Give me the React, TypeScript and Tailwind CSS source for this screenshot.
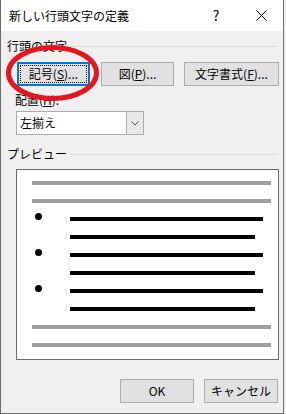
import React from "react";

function Btn({
  children,
  className,
  focused,
}: {
  children: React.ReactNode;
  className: string;
  focused?: boolean;
}) {
  if (focused) {
    return (
      <div
        className={`flex h-[24px] items-center justify-center border-2 border-[#0078d7] bg-[#e1e1e1] p-[1px] ${className}`}
      >
        <div className="flex h-full w-full items-center justify-center border border-dotted border-black">
          {children}
        </div>
      </div>
    );
  }
  return (
    <div
      className={`flex h-[24px] items-center justify-center border border-[#adadad] bg-[#e1e1e1] ${className}`}
    >
      {children}
    </div>
  );
}

function GroupLabel({ text, className }: { text: string; className: string }) {
  return (
    <div className={`flex h-[16px] items-center ${className}`}>
      <span className="leading-[16px]">{text}</span>
      <div className="ml-[3px] mr-[5px] h-px flex-1 bg-[#dcdcdc]" />
    </div>
  );
}

function Bar({ gray, bullet, width }: { gray?: boolean; bullet?: boolean; width: string }) {
  if (gray) {
    return <div className={`ml-[15px] h-[4px] bg-[#a0a0a0] ${width}`} />;
  }
  return (
    <div className="flex h-[4px] items-start">
      <span
        className={`ml-[18px] mt-[-4px] h-[7px] w-[7px] shrink-0 rounded-full ${bullet ? "bg-black" : ""}`}
      />
      <div className={`ml-[28px] h-[4px] bg-black ${width}`} />
    </div>
  );
}

export default function App() {
  return (
    <div className="relative h-[414px] w-[286px] bg-[#f0f0f0] font-['Noto_Sans_CJK_JP','Noto_Sans',sans-serif] text-[12px] text-black">
      <div className="flex h-[414px] w-[284px] flex-col border-b border-l border-r border-[#6b6b6b]">
        <div className="flex h-[31px] items-center bg-white">
          <span className="pl-[8px] leading-[16px]">新しい行頭文字の定義</span>
          <span className="ml-auto flex w-[46px] justify-center text-[14px]">?</span>
          <span className="flex w-[44px] justify-center">
            <svg width="11" height="11" viewBox="0 0 11 11">
              <path d="M0.5 0.5 L10.5 10.5 M10.5 0.5 L0.5 10.5" stroke="#000" strokeWidth="1" />
            </svg>
          </span>
        </div>

        <div className="flex flex-1 flex-col pl-[6px]">
          <GroupLabel text="行頭の文字" className="mt-[7px]" />

          <div className="ml-[10px] mt-[8px] flex">
            <Btn focused className="w-[73px]">
              記号(<span className="underline">S</span>)...
            </Btn>
            <Btn className="ml-[11px] w-[73px]">
              図(<span className="underline">P</span>)...
            </Btn>
            <Btn className="ml-[10px] w-[95px]">
              文字書式(<span className="underline">F</span>)...
            </Btn>
          </div>

          <div className="ml-[8px] mt-[6px] h-[16px] leading-[16px]">
            配置(<span className="underline">H</span>):
          </div>

          <div className="ml-[9px] mt-[3px] flex h-[24px] w-[128px] border border-[#adadad] bg-white">
            <span className="flex-1 pl-[3px] leading-[22px]">左揃え</span>
            <span className="flex w-[17px] items-center justify-center border-l border-[#adadad] bg-[#e8e8e8]">
              <svg width="8" height="5" viewBox="0 0 8 5">
                <path d="M0.5 0.5 L4 4 L7.5 0.5" fill="none" stroke="#555" strokeWidth="1" />
              </svg>
            </span>
          </div>

          <GroupLabel text="プレビュー" className="mt-[11px]" />

          <div className="ml-[9px] mt-[7px] flex h-[191px] w-[263px] flex-col gap-[14px] border border-[#6d6d6d] bg-white pt-[11px]">
            <Bar gray width="w-[239px]" />
            <Bar gray width="w-[239px]" />
            <Bar bullet width="w-[193px]" />
            <Bar width="w-[185px]" />
            <Bar bullet width="w-[193px]" />
            <Bar width="w-[185px]" />
            <Bar bullet width="w-[193px]" />
            <Bar width="w-[185px]" />
            <Bar gray width="w-[239px]" />
            <Bar gray width="w-[239px]" />
          </div>

          <div className="mr-[5px] mt-[19px] flex justify-end gap-[10px]">
            <Btn className="w-[74px]">OK</Btn>
            <Btn className="w-[74px]">キャンセル</Btn>
          </div>
        </div>
      </div>

      <svg className="absolute left-0 top-0" width="110" height="110" viewBox="0 0 110 110">
        <ellipse cx="52.5" cy="73" rx="44" ry="25.5" fill="none" stroke="#e8141e" strokeWidth="5" />
      </svg>
    </div>
  );
}
